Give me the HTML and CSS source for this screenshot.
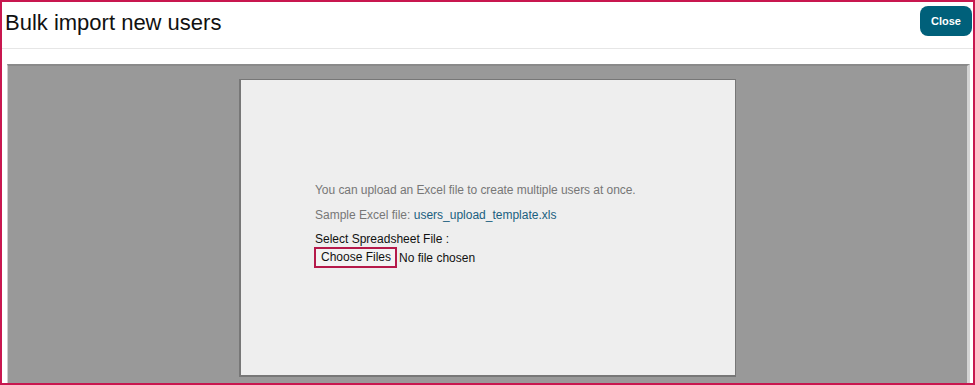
FILE: index.html
```html
<!DOCTYPE html>
<html>
<head>
<meta charset="utf-8">
<link rel="stylesheet" href="styles.css">
</head>
<body>
<div class="frame">
  <header class="header">
    <h1 class="title">Bulk import new users</h1>
    <button class="close-btn">Close</button>
  </header>
  <div class="viewer">
    <div class="panel">
      <div class="content">
        <p class="intro">You can upload an Excel file to create multiple users at once.</p>
        <p class="sample">Sample Excel file: <a class="link" href="#">users_upload_template.xls</a></p>
        <div class="label">Select Spreadsheet File :</div>
        <div class="file-row">
          <span class="choose">Choose Files</span>
          <span class="nofile">No file chosen</span>
        </div>
      </div>
    </div>
  </div>
</div>
</body>
</html>
```
FILE: styles.css
```css
* { box-sizing: border-box; }
html, body { margin: 0; padding: 0; background: #fff; }
body { font-family: "Liberation Sans", Arial, sans-serif; }
.frame {
  width: 975px;
  height: 385px;
  border: 2px solid #c8174f;
  display: flex;
  flex-direction: column;
  overflow: hidden;
}
.header {
  height: 47px;
  border-bottom: 1px solid #e6e6e6;
  display: flex;
  justify-content: space-between;
  align-items: flex-start;
  padding: 0 0 0 3px;
  flex-shrink: 0;
}
.title {
  margin: 8px 0 0 0;
  font-weight: normal;
  font-size: 22px;
  line-height: 26px;
  color: #111;
}
.close-btn {
  margin-top: 4px;
  margin-right: 1px;
  width: 52px;
  height: 30px;
  border: none;
  border-radius: 8px;
  background: #00607a;
  color: #fff;
  font-family: "Liberation Sans", Arial, sans-serif;
  font-weight: bold;
  font-size: 11px;
  padding: 0;
}
.viewer {
  margin: 15px 3px 0 5px;
  flex: 1;
  background: #999;
  border-top: 2px solid #8a8a8a;
  border-left: 1px solid #cfcfcf;
  border-right: 3px solid #d4d4d4;
  display: flex;
  justify-content: center;
  padding-top: 13px;
  padding-bottom: 6px;
}
.panel {
  width: 497px;
  background: #eee;
  border: 1px solid #777;
  border-left-width: 2px;
  border-bottom-width: 2px;
  padding: 102px 0 0 74px;
}
.content { font-size: 12px; }
.intro { margin: 0; color: #777; line-height: 16px; letter-spacing: -0.05px; }
.sample { margin: 9px 0 0 0; color: #777; line-height: 16px; }
.link { color: #1a5f80; text-decoration: none; }
.label { margin-top: 9px; color: #111; line-height: 14px; }
.file-row { display: flex; align-items: center; margin-top: 1px; margin-left: -1px; }
.choose {
  border: 2px solid #b5194a;
  background: #f3f3f3;
  padding: 1px 4px 2px 5px;
  font-size: 12px;
  color: #111;
  line-height: 14px;
}
.nofile { margin-left: 2px; color: #111; }
```
